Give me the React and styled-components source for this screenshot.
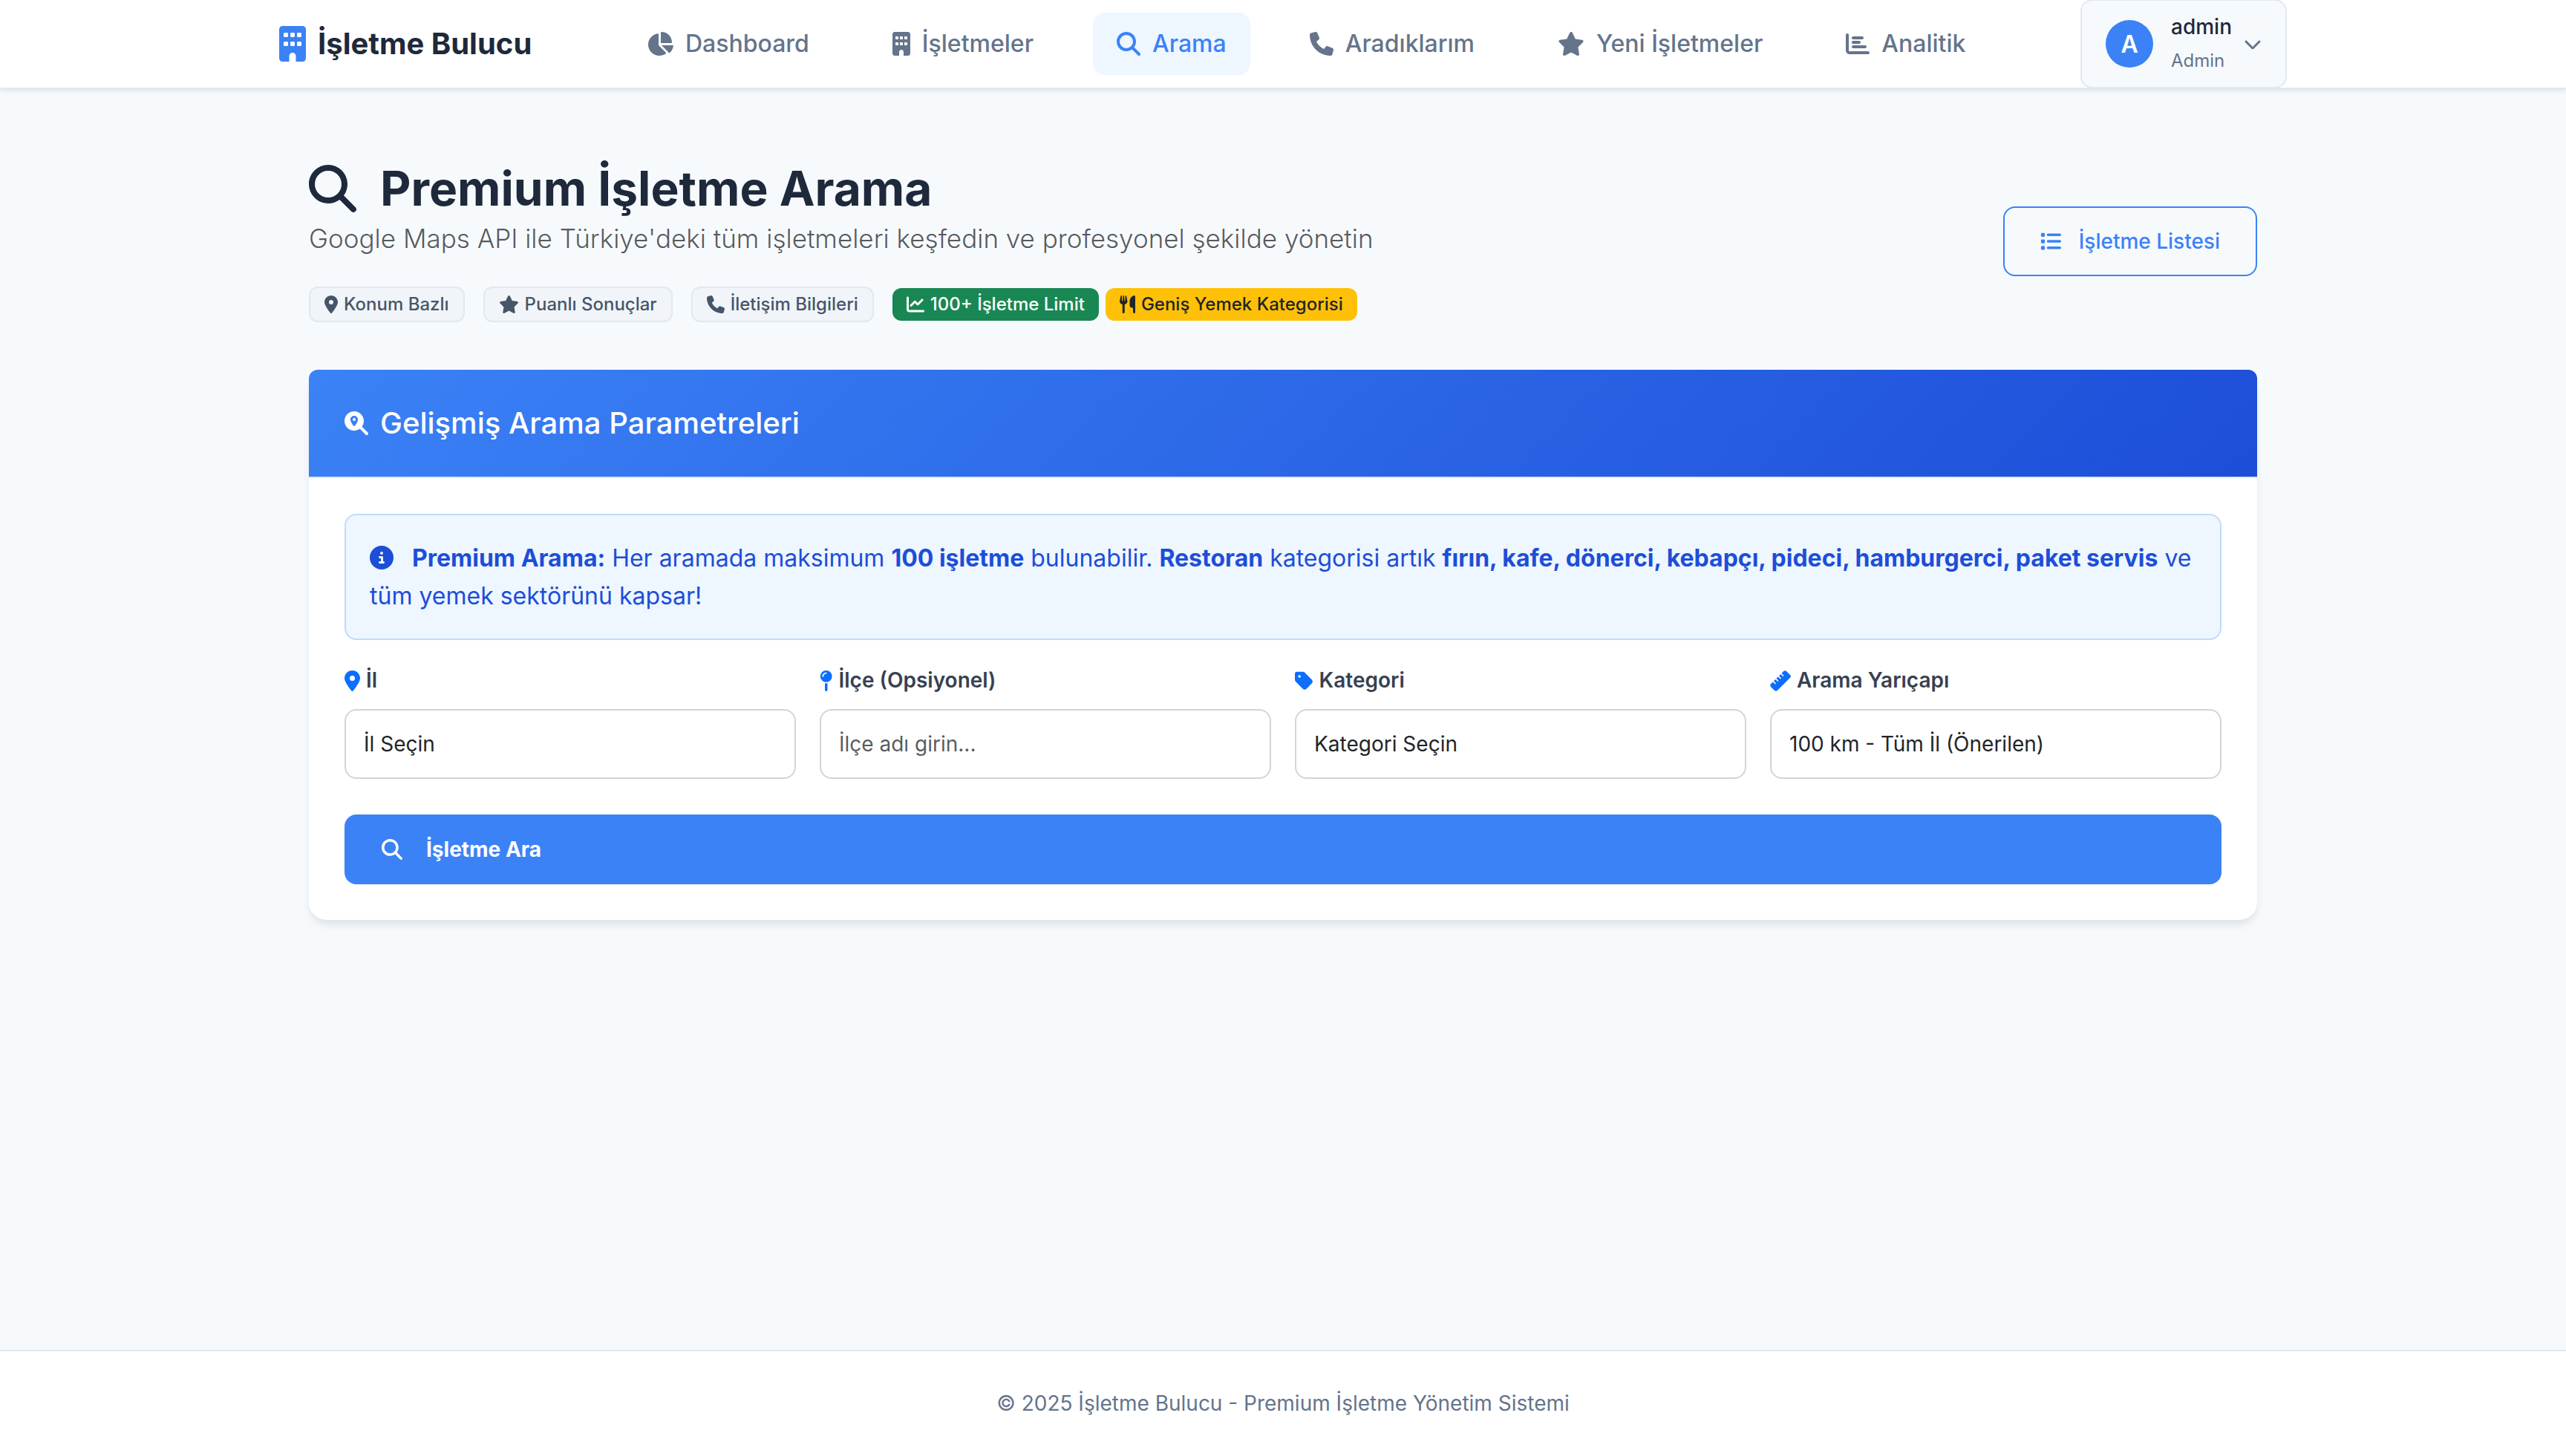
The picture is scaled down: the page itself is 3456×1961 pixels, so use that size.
import styled, { createGlobalStyle } from "styled-components"
import { IconContext } from "react-icons"
import {
    FaBuilding, FaChartBar, FaChartLine, FaChartPie, FaChevronDown, FaCircleInfo, FaList, FaLocationDot,
    FaMagnifyingGlass, FaMagnifyingGlassLocation, FaMapPin, FaPhone, FaRuler, FaStar, FaTag, FaUtensils
} from "react-icons/fa6"

const GlobalStyle = createGlobalStyle`
    *, *::before, *::after {
        box-sizing: border-box;
    }
    body {
        margin: 0;
        background-color: #f7fafd;
        color: #1e293b;
        font-family: Inter, "Liberation Sans", sans-serif;
        font-size: 32px;
    }
    h1, h2, p {
        margin: 0;
    }
    svg {
        width: auto;
        height: 1em;
        flex-shrink: 0;
    }
    button, input, select {
        font-family: inherit;
    }
`

const Page = styled.div`
    min-height: 100vh;
    display: flex;
    flex-direction: column;
`

const Navbar = styled.header`
    position: relative;
    background-color: white;
    border-bottom: 2px solid #e2e8f0;
    box-shadow: 0 2px 6px rgba(0, 0, 0, 0.1);
`

const NavInner = styled.div`
    max-width: 2800px;
    height: 118px;
    margin: 0 auto;
    padding: 0 48px;
    display: flex;
    align-items: center;
    justify-content: space-between;
`

const Brand = styled.a`
    display: flex;
    align-items: center;
    gap: 16px;
    color: #1e293b;
    font-size: 40px;
    line-height: 50px;
    font-weight: 700;
    text-decoration: none;

    svg {
        height: 48px;
        color: #3b82f6;
    }
`

const Menu = styled.nav`
    display: flex;
    gap: 48px;
`

const MenuLink = styled.a`
    display: flex;
    align-items: center;
    gap: 16px;
    padding: 16px 32px;
    border-radius: 16px;
    line-height: 52px;
    font-weight: 500;
    text-decoration: none;
    color: ${props => props.$active ? "#3b82f6" : "#64748b"};
    background-color: ${props => props.$active ? "#eef6ff" : "transparent"};
`

const UserButton = styled.button`
    display: flex;
    align-items: center;
    flex-shrink: 0;
    padding: 13px 32px;
    border: 2px solid #e2e8f0;
    border-radius: 16px;
    background-color: #f7fafd;
    color: #64748b;
    font-size: 24px;
    line-height: 45px;
    text-align: left;
`

const Avatar = styled.span`
    width: 64px;
    height: 64px;
    margin-right: 24px;
    border-radius: 50%;
    display: flex;
    align-items: center;
    justify-content: center;
    background-color: #3b82f6;
    color: white;
    font-size: 32px;
    font-weight: 600;
`

const UserText = styled.span`
    display: flex;
    flex-direction: column;
    margin-right: 16px;
`

const UserName = styled.span`
    color: #1e293b;
    font-size: 28px;
    font-weight: 500;
`

const Main = styled.main`
    flex: 1;
    width: 100%;
    max-width: 2720px;
    margin: 0 auto;
    padding: 96px 48px;
`

const PageHeader = styled.div`
    display: flex;
    align-items: center;
    justify-content: space-between;
    margin-bottom: 64px;
`

const Title = styled.h1`
    display: flex;
    align-items: center;
    gap: 32px;
    font-size: 64px;
    line-height: 76px;
    font-weight: 700;
`

const Subtitle = styled.p`
    color: rgba(33, 37, 41, 0.75);
    font-size: 35px;
    line-height: 58px;
    font-weight: 300;
`

const Badges = styled.div`
    display: flex;
    align-items: center;
    gap: 25px;
    margin-top: 36px;
`

const BadgeGroup = styled.div`
    display: flex;
    gap: 9px;
`

const Badge = styled.span`
    display: flex;
    align-items: center;
    gap: 8px;
    padding: 0 19px;
    border-radius: 12px;
    font-size: 24px;
    line-height: 44px;
    font-weight: 500;
    color: #475569;
    background-color: #f1f5f9;
    border: 2px solid #e2e8f0;
`

const SolidBadge = styled(Badge)`
    border: none;
    color: ${props => props.$color};
    background-color: ${props => props.$bg};
`

const ListLink = styled.a`
    display: flex;
    align-items: center;
    gap: 24px;
    padding: 22px 48px;
    border: 2px solid #3b82f6;
    border-radius: 16px;
    color: #3b82f6;
    font-size: 28px;
    line-height: 46px;
    font-weight: 500;
    text-decoration: none;
`

const Card = styled.section`
    background-color: white;
    border-radius: 24px;
    box-shadow: 0 8px 12px -2px rgba(0, 0, 0, 0.1);
`

const CardHeader = styled.div`
    padding: 48px;
    border-bottom: 2px solid #e2e8f0;
    border-radius: 12px 12px 0 0;
    background: linear-gradient(135deg, #3b82f6 0%, #1d4ed8 100%) padding-box;
    color: white;
`

const CardTitle = styled.h2`
    display: flex;
    align-items: center;
    gap: 16px;
    font-size: 40px;
    line-height: 48px;
    font-weight: 500;

    svg {
        height: 32px;
    }
`

const CardBody = styled.form`
    padding: 48px;
`

const Alert = styled.div`
    padding: 32px;
    border: 2px solid #bfdbfe;
    border-radius: 16px;
    background-color: #eef6ff;
    color: #1d4ed8;
    line-height: 51px;

    svg {
        margin-right: 16px;
        vertical-align: -4px;
    }
`

const Fields = styled.div`
    display: grid;
    grid-template-columns: repeat(4, 1fr);
    gap: 32px;
    margin: 32px 0 48px;
`

const Field = styled.div`
    display: flex;
    flex-direction: column;
    gap: 16px;
`

const Label = styled.label`
    display: flex;
    align-items: center;
    gap: 8px;
    color: #374151;
    font-size: 28px;
    line-height: 45px;
    font-weight: 600;

    svg {
        color: #0d6efd;
    }
`

const Input = styled.input`
    width: 100%;
    height: 94px;
    padding: 0 24px;
    border: 2px solid #d1d5db;
    border-radius: 16px;
    background-color: white;
    color: #212529;
    font-size: 28px;
    appearance: none;

    &::placeholder {
        color: rgba(33, 37, 41, 0.75);
        opacity: 1;
    }
`

const SubmitButton = styled.button`
    width: 100%;
    display: flex;
    align-items: center;
    gap: 32px;
    padding: 24px 50px;
    border: none;
    border-radius: 16px;
    background-color: #3b82f6;
    color: white;
    font-size: 28px;
    line-height: 46px;
    font-weight: 700;
`

const Footer = styled.footer`
    padding: 48px;
    border-top: 2px solid #e2e8f0;
    background-color: white;
    color: #64748b;
    font-size: 28px;
    line-height: 45px;
    text-align: center;
`

const menu = [
    { text: "Dashboard", icon: <FaChartPie /> },
    { text: "İşletmeler", icon: <FaBuilding /> },
    { text: "Arama", icon: <FaMagnifyingGlass />, active: true },
    { text: "Aradıklarım", icon: <FaPhone /> },
    { text: "Yeni İşletmeler", icon: <FaStar /> },
    { text: "Analitik", icon: <FaChartBar /> },
]

// "auto" lets every icon keep the width of its own viewBox
const iconSettings = { size: "auto" }

const App = () => {
    return (
        <IconContext.Provider value={iconSettings}>
            <Page>
                <GlobalStyle />
                <Navbar>
                    <NavInner>
                        <Brand href="#"><FaBuilding />İşletme Bulucu</Brand>
                        <Menu>
                            {menu.map(item => (
                                <MenuLink href="#" key={item.text} $active={item.active}>
                                    {item.icon}
                                    {item.text}
                                </MenuLink>
                            ))}
                        </Menu>
                        <UserButton type="button">
                            <Avatar>A</Avatar>
                            <UserText>
                                <UserName>admin</UserName>
                                <span>Admin</span>
                            </UserText>
                            <FaChevronDown />
                        </UserButton>
                    </NavInner>
                </Navbar>
                <Main>
                    <PageHeader>
                        <div>
                            <Title><FaMagnifyingGlass />Premium İşletme Arama</Title>
                            <Subtitle>Google Maps API ile Türkiye'deki tüm işletmeleri keşfedin ve profesyonel şekilde yönetin</Subtitle>
                            <Badges>
                                <Badge><FaLocationDot />Konum Bazlı</Badge>
                                <Badge><FaStar />Puanlı Sonuçlar</Badge>
                                <Badge><FaPhone />İletişim Bilgileri</Badge>
                                <BadgeGroup>
                                    <SolidBadge $bg="#198754" $color="white"><FaChartLine />100+ İşletme Limit</SolidBadge>
                                    <SolidBadge $bg="#ffc107" $color="#212529"><FaUtensils />Geniş Yemek Kategorisi</SolidBadge>
                                </BadgeGroup>
                            </Badges>
                        </div>
                        <ListLink href="#"><FaList />İşletme Listesi</ListLink>
                    </PageHeader>
                    <Card>
                        <CardHeader>
                            <CardTitle><FaMagnifyingGlassLocation />Gelişmiş Arama Parametreleri</CardTitle>
                        </CardHeader>
                        <CardBody onSubmit={e => e.preventDefault()}>
                            <Alert>
                                <FaCircleInfo /> <strong>Premium Arama:</strong> Her aramada maksimum <strong>100 işletme</strong> bulunabilir. <strong>Restoran</strong> kategorisi artık <strong>fırın, kafe, dönerci, kebapçı, pideci, hamburgerci, paket servis</strong> ve tüm yemek sektörünü kapsar!
                            </Alert>
                            <Fields>
                                <Field>
                                    <Label htmlFor="city"><FaLocationDot />İl</Label>
                                    <Input as="select" id="city">
                                        <option>İl Seçin</option>
                                    </Input>
                                </Field>
                                <Field>
                                    <Label htmlFor="district"><FaMapPin />İlçe (Opsiyonel)</Label>
                                    <Input type="text" id="district" placeholder="İlçe adı girin..." />
                                </Field>
                                <Field>
                                    <Label htmlFor="category"><FaTag />Kategori</Label>
                                    <Input as="select" id="category">
                                        <option>Kategori Seçin</option>
                                    </Input>
                                </Field>
                                <Field>
                                    <Label htmlFor="radius"><FaRuler />Arama Yarıçapı</Label>
                                    <Input as="select" id="radius">
                                        <option>100 km - Tüm İl (Önerilen)</option>
                                    </Input>
                                </Field>
                            </Fields>
                            <SubmitButton type="submit"><FaMagnifyingGlass />İşletme Ara</SubmitButton>
                        </CardBody>
                    </Card>
                </Main>
                <Footer>© 2025 İşletme Bulucu - Premium İşletme Yönetim Sistemi</Footer>
            </Page>
        </IconContext.Provider>
    )
}

export default App
